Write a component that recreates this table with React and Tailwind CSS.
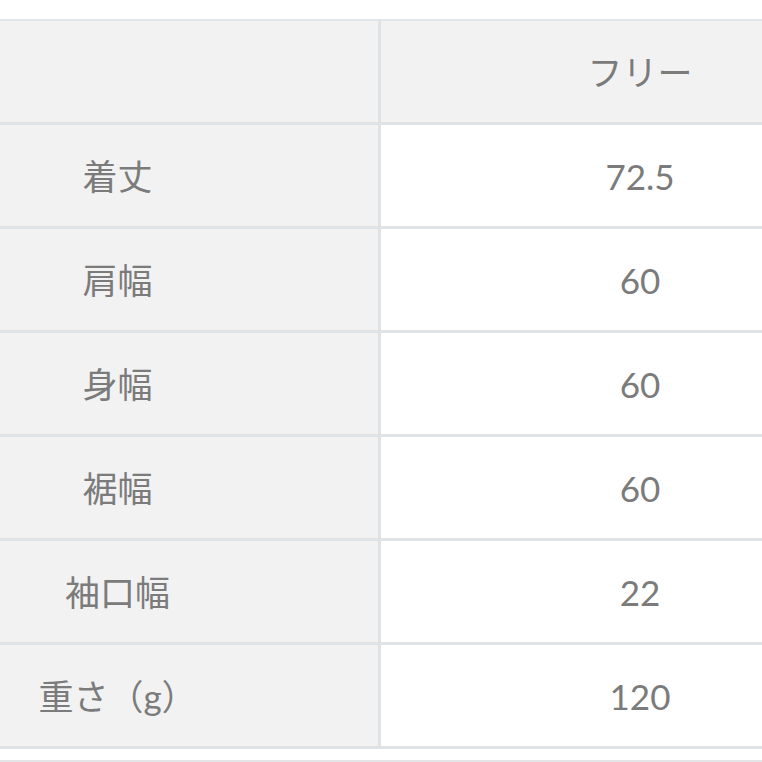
import React from "react";

const rows = [
  ["着丈", "72.5"],
  ["肩幅", "60"],
  ["身幅", "60"],
  ["裾幅", "60"],
  ["袖口幅", "22"],
  ["重さ（g）", "120"],
];

export default function App() {
  return (
    <div
      className="w-[762px] h-[762px] bg-white overflow-hidden text-[#7b7b7b] text-[35px]"
      style={{ fontFamily: 'Lato, "Noto Sans CJK JP", sans-serif' }}
    >
      <div className="pt-[19px]">
        <div className="w-[1042px] ml-[-143px] border-t-2 border-[#e3e6e8]">
          <div className="flex h-[104px] border-b-[3px] border-[#e0e3e6] bg-[#f2f2f2]">
            <div className="w-[524px] border-r-[3px] border-[#e0e3e6]" />
            <div className="flex-1 flex items-center justify-center leading-none pt-[2px]">フリー</div>
          </div>
          {rows.map(([label, value]) => (
            <div key={label} className="flex h-[104px] border-b-[3px] border-[#e0e3e6]">
              <div className="w-[524px] bg-[#f2f2f2] border-r-[3px] border-[#e0e3e6] flex items-center justify-center leading-none pt-[2px]">
                {label}
              </div>
              <div className="flex-1 bg-white flex items-center justify-center leading-none pt-[2px]">
                {value}
              </div>
            </div>
          ))}
        </div>
        <div className="h-[11px]" />
        <div className="h-[2px] bg-[#e3e5e7]" />
      </div>
    </div>
  );
}
